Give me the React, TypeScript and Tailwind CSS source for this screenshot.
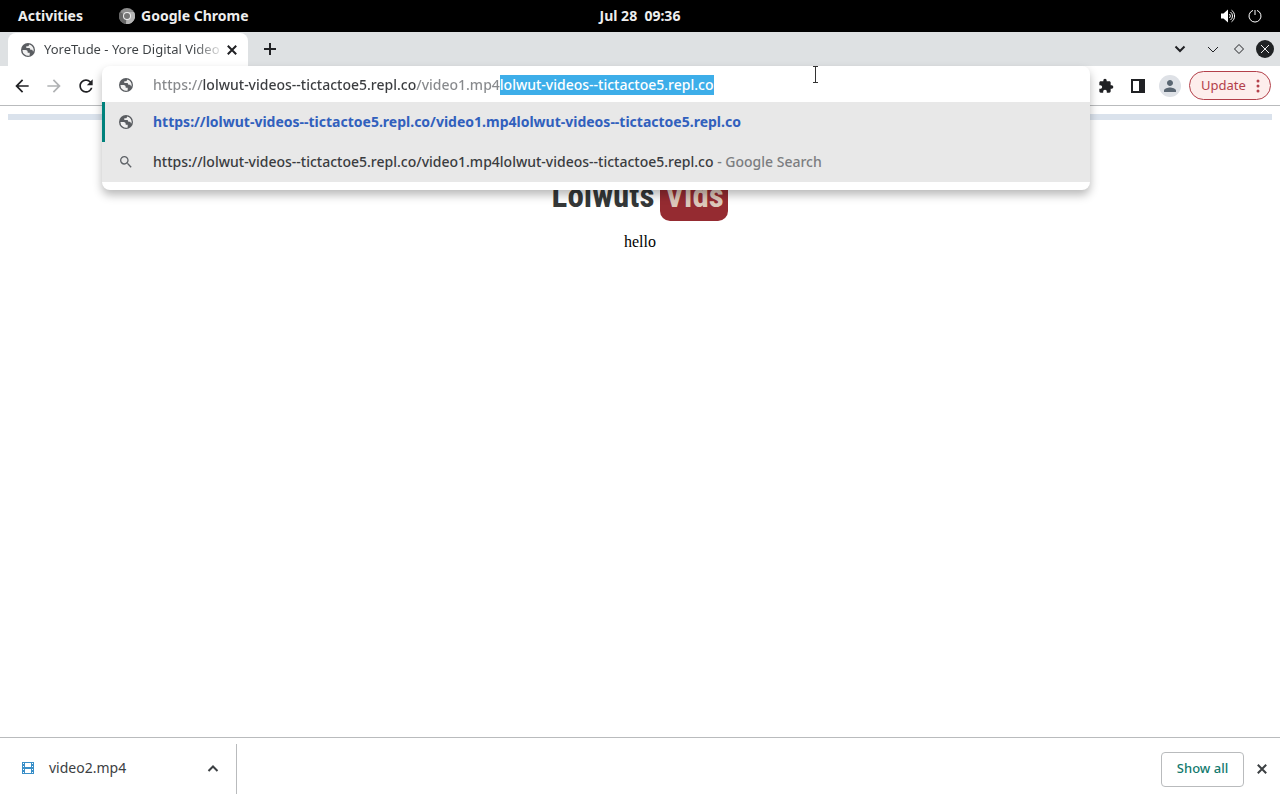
import { useEffect, useRef } from "react";
import type { ReactNode } from "react";
import { MdArrowBack, MdArrowForward, MdRefresh, MdExtension, MdPerson, MdSearch } from "react-icons/md";

const HOST = "lolwut-videos--tictactoe5.repl.co";
const TYPED = `https://${HOST}/video1.mp4`;
const URL_TEXT = TYPED + HOST;

function Stroke({ d }: { d: string }) {
  return (
    <svg viewBox="0 0 16 16" className="size-4" fill="none" stroke="currentColor" strokeWidth="2" aria-hidden="true">
      <path d={d} />
    </svg>
  );
}

const CROSS = "m3.800 3.800 8.400 8.400m0-8.400-8.400 8.400";

function Globe() {
  return (
    <svg viewBox="0 0 16 16" className="size-4 shrink-0" aria-hidden="true">
      <circle cx="8" cy="8" r="7" fill="#5a5d61" />
      <path d="M2.4 8h3.2c1.3 0 2.1.8 2.1 2v.7h2v2.9A5.8 5.8 0 0 1 2.4 8Z" fill="#f1f1f1" />
      <path d="M9 2.4c0 1.200-.5 1.900-1.600 1.900H6.300v1.800H8.800c1 0 1.500.6 1.500 1.700h1.200c1 0 1.300.7 1.300 1.500h.8A5.800 5.800 0 0 0 9 2.400Z" fill="#f1f1f1" />
    </svg>
  );
}

function TopBar() {
  return (
    <header className="grid h-8 grid-cols-3 items-center bg-black text-sm font-bold text-[#eeeeee]">
      <div className="flex items-center gap-9 pl-[18px]">
        <button>Activities</button>
        <button className="flex items-center gap-1.5">
          <svg viewBox="0 0 16 16" className="size-4" aria-hidden="true">
            <circle cx="8" cy="8" r="8" fill="#8d8d8d" />
            <path d="M8 8 1 4A8 8 0 0 0 7 16Z" fill="#666" />
            <path d="M8 4h7a8 8 0 0 1-8 12Z" fill="#b5b5b5" />
            <circle cx="8" cy="8" r="4" fill="#eee" />
            <circle cx="8" cy="8" r="3" fill="#777" />
          </svg>
          Google Chrome
        </button>
      </div>
      <button className="justify-self-center whitespace-pre">Jul 28  09:36</button>
      <div className="flex items-center justify-end gap-3 pr-[18px]">
        <button aria-label="Volume">
          <svg viewBox="0 0 16 16" className="size-4" fill="none" stroke="#fff" aria-hidden="true">
            <path d="M1 5.500h2.500L8 1.500v13l-4.500-4H1Z" fill="#fff" stroke="none" />
            <path d="M9.500 6a3 3 0 0 1 0 4M10.500 4a5 5 0 0 1 0 8M11.500 2.200a7 7 0 0 1 0 11.600" />
          </svg>
        </button>
        <button aria-label="Power">
          <svg viewBox="0 0 14 14" className="size-3.5" fill="none" stroke="#fff" aria-hidden="true">
            <path d="M5 1.400a6 6 0 1 0 4 0M7 1v5" />
          </svg>
        </button>
      </div>
    </header>
  );
}

function TabStrip() {
  return (
    <div className="flex h-[34px] items-stretch bg-[#dee1e3] pl-2 text-[#202124]">
      <div className="mt-px flex w-60 items-center rounded-t-lg bg-white pr-2 pl-3">
        <Globe />
        <span className="ml-2 bg-linear-to-r from-[#3c4043] from-85% to-[#3c4043]/15 bg-clip-text text-[13px] whitespace-nowrap text-transparent">
          YoreTude - Yore Digital Video
        </span>
        <button aria-label="Close tab" className="ml-auto">
          <Stroke d={CROSS} />
        </button>
      </div>
      <button aria-label="New tab" className="ml-3.5">
        <Stroke d="M8 2v12M2 8h12" />
      </button>
      <div className="ml-auto flex items-center pr-1.5">
        <button aria-label="Search tabs" className="mr-[17px]">
          <Stroke d="m3.500 5.500 4.500 4.500 4.500-4.500" />
        </button>
        <button aria-label="Minimize" className="mr-2.5">
          <svg viewBox="0 0 16 16" className="size-4" fill="none" stroke="currentColor" aria-hidden="true">
            <path d="m3 6 5 5 5-5" />
          </svg>
        </button>
        <button aria-label="Restore" className="mr-[9px]">
          <svg viewBox="0 0 16 16" className="size-4" fill="none" stroke="currentColor" aria-hidden="true">
            <path d="m8 3.500 4.500 4.500L8 12.500 3.500 8Z" />
          </svg>
        </button>
        <button aria-label="Close window">
          <svg viewBox="0 0 18 18" className="size-[18px]" aria-hidden="true">
            <circle cx="9" cy="9" r="9" fill="#1f2224" />
            <path d="m5 5 8 8m0-8-8 8" stroke="#eee" />
          </svg>
        </button>
      </div>
    </div>
  );
}

function Suggestion({ icon, selected, children }: { icon: ReactNode; selected?: boolean; children: ReactNode }) {
  return (
    <li
      role="option"
      aria-selected={!!selected}
      className={`flex h-10 items-center border-l-[3px] bg-[#e8e8e8] pl-[13px] whitespace-nowrap ${selected ? "border-[#00827c]" : "border-[#e8e8e8]"}`}
    >
      {icon}
      <span className="ml-[19px]">{children}</span>
    </li>
  );
}

function Omnibox() {
  const input = useRef<HTMLInputElement>(null);
  useEffect(() => {
    input.current?.focus();
    input.current?.setSelectionRange(TYPED.length, URL_TEXT.length);
  }, []);
  return (
    <div className="relative h-full min-w-0 flex-1">
      <div className="absolute inset-x-0 top-0 z-10 overflow-hidden rounded-lg bg-white pb-2 text-sm font-medium text-[#3a3c3f] shadow-[0_5px_10px_rgba(0,0,0,0.28)]">
        <div className="flex h-9 items-center pt-0.5 pl-4">
          <Globe />
          <input
            ref={input}
            aria-label="Address and search bar"
            defaultValue={URL_TEXT}
            spellCheck={false}
            className="ml-[19px] h-5 flex-1 bg-[linear-gradient(to_right,#87898c_49px,#3a3c3f_49px,#3a3c3f_263px,#87898c_263px)] bg-clip-text leading-5 text-transparent outline-none selection:bg-[#3daee9] selection:text-white"
          />
        </div>
        <ul role="listbox" aria-label="Suggestions">
          <Suggestion selected icon={<Globe />}>
            <b className="text-[#3160bd]">{URL_TEXT}</b>
          </Suggestion>
          <Suggestion icon={<MdSearch className="size-4 text-[#5f6368]" />}>
            {URL_TEXT}
            <span className="text-[#7b7d80]"> - Google Search</span>
          </Suggestion>
        </ul>
      </div>
      <svg viewBox="0 0 7 17" className="absolute top-0 left-[710px] z-20 h-[17px] w-[7px]" fill="none" stroke="#333" aria-hidden="true">
        <path d="M1 .5h5M1 16.500h5M3.500.5v16" />
      </svg>
    </div>
  );
}

function Toolbar() {
  return (
    <div className="flex h-10 items-center border-b border-[#b9bbbd] bg-white text-[#202124]">
      <div className="flex w-[102px] shrink-0 items-center gap-3 pl-3">
        <button aria-label="Back"><MdArrowBack className="size-5" /></button>
        <button aria-label="Forward" className="text-[#b0b2b4]"><MdArrowForward className="size-5" /></button>
        <button aria-label="Reload"><MdRefresh className="size-5" /></button>
      </div>
      <Omnibox />
      <div className="flex shrink-0 items-center pr-[9px] pl-2">
        <button aria-label="Extensions"><MdExtension className="size-4" /></button>
        <button aria-label="Side panel" className="ml-4">
          <svg viewBox="0 0 16 16" className="size-4" aria-hidden="true">
            <path fillRule="evenodd" d="M1 1h14v14H1ZM3 3v10h6V3Z" fill="currentColor" />
          </svg>
        </button>
        <button aria-label="Profile" className="ml-[13px] flex size-[22px] items-center justify-center rounded-full bg-[#dee1e6] text-[#5a6672]">
          <MdPerson className="size-[18px]" />
        </button>
        <button className="ml-2 flex h-[29px] w-[82px] items-center justify-between rounded-full border border-[#b3404a] bg-[#fdeeec] pr-1 pl-[11px] text-[13px] text-[#b3404a]">
          Update
          <svg viewBox="0 0 16 16" className="size-4" fill="currentColor" aria-hidden="true">
            <circle cx="8" cy="3" r="1.500" />
            <circle cx="8" cy="8" r="1.500" />
            <circle cx="8" cy="13" r="1.500" />
          </svg>
        </button>
      </div>
    </div>
  );
}

function Page() {
  return (
    <main className="flex-1 bg-white p-2 text-center font-['Liberation_Serif',serif] text-black">
      <div className="h-1.5 bg-[#dae2ec]" />
      <div className="flex h-[101px] items-end justify-center gap-1.5 font-['Roboto_Condensed','Open_Sans_Condensed','DejaVu_Sans_Condensed',sans-serif] text-[33px] leading-[50px] font-bold text-[#353838]">
        <span>Lolwuts</span>
        <span className="flex h-16 w-[68px] items-end justify-center rounded-[10px] bg-[#952b31] text-[#dcc8bb]">Vids</span>
      </div>
      <p className="mt-3 text-base leading-[18px]">hello</p>
    </main>
  );
}

function DownloadShelf() {
  return (
    <footer className="flex h-[63px] items-center border-t border-[#b9bbbd] bg-white text-[#3c4043]">
      <div className="flex h-[50px] w-[237px] items-center border-r border-[#b9bbbd] pr-[15px] pb-0.5 pl-[22px]">
        <svg viewBox="0 0 12 12" className="size-3" aria-hidden="true">
          <path fillRule="evenodd" d="M0 0h12v12H0ZM3 1v4h6V1ZM3 7v4h6V7ZM1 1v1h1V1ZM1 4v1h1V4ZM1 7v1h1V7ZM1 10v1h1v-1ZM10 1v1h1V1ZM10 4v1h1V4ZM10 7v1h1V7ZM10 10v1h1v-1Z" fill="#3a8fc8" />
        </svg>
        <a href="#video2" className="ml-[15px] text-sm">video2.mp4</a>
        <button aria-label="Download options" className="ml-auto">
          <Stroke d="m3.500 11 4.500-4.500 4.500 4.500" />
        </button>
      </div>
      <button className="ml-auto h-[35px] w-[83px] rounded border border-[#b9bbbd] text-[13px] font-medium text-[#127a6e]">Show all</button>
      <button aria-label="Close downloads" className="mr-2.5 ml-2.5">
        <Stroke d={CROSS} />
      </button>
    </footer>
  );
}

export default function App() {
  return (
    <div className="flex min-h-screen flex-col bg-white font-['Noto_Sans',sans-serif]">
      <TopBar />
      <TabStrip />
      <Toolbar />
      <Page />
      <DownloadShelf />
    </div>
  );
}
